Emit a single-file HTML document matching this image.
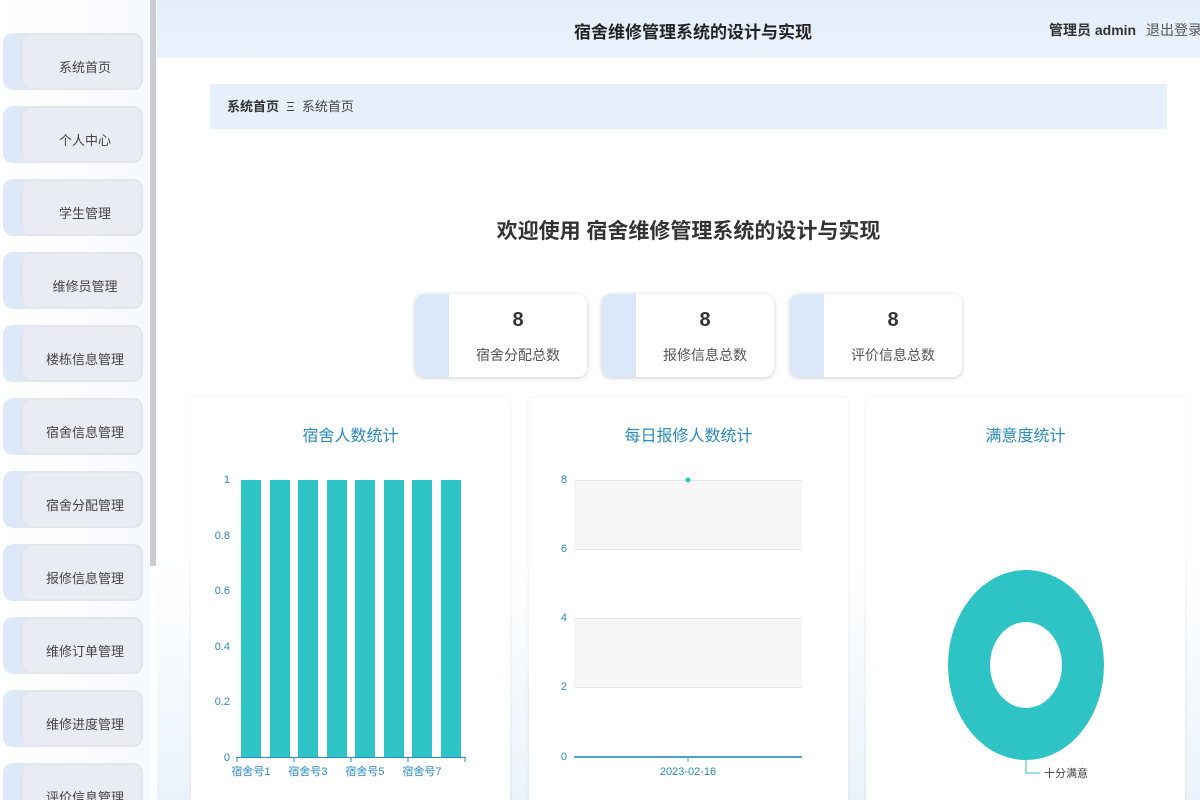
<!DOCTYPE html>
<html style="overflow:hidden"><head><meta charset="utf-8">
<style>
*{margin:0;padding:0;box-sizing:border-box}
html,body{width:1200px;height:800px;overflow:hidden}
body{position:relative;background:#fff;font-family:"Liberation Sans","Noto Sans CJK SC",sans-serif;color:#333}
.side{position:absolute;left:0;top:0;width:150px;height:800px;background:linear-gradient(90deg,#fff 0,#f6f9fd 100%)}
.scroll{position:absolute;left:150px;top:0;width:6px;height:566px;background:#c9ccd1}
.item{position:absolute;left:3px;width:140px;height:57px;background:#dde8f8;border-radius:10px}
.item div{position:absolute;left:18px;top:0;right:0;bottom:0;background:#e9ecf3;border:2px solid #e2e5ea;border-radius:10px;font-size:13px;color:#444;padding-top:24px;line-height:18px;text-align:center;padding-left:6px}
.top{position:absolute;left:157px;top:0;width:1043px;height:58px;background:linear-gradient(180deg,#e3eefb,#eaf2fc)}
.top .t{position:absolute;left:0;width:1072px;text-align:center;top:18px;font-size:17px;font-weight:bold;color:#222}
.top .u{position:absolute;right:-2px;top:20px;font-size:14px;font-weight:bold;color:#333}
.top .u span{color:#555;font-weight:normal;margin-left:6px}
.bc{position:absolute;left:210px;top:84px;width:957px;height:45px;background:#e6f0fb;font-size:13px;line-height:45px;padding-left:17px;color:#444}
.bc b{color:#333}
.welcome{position:absolute;left:0;width:1377px;top:215px;text-align:center;font-size:21px;font-weight:bold;color:#333}
.card{position:absolute;top:294px;width:172px;height:83px;background:#fff;border-radius:9px;box-shadow:0 1px 5px rgba(0,0,0,.2);overflow:hidden}
.card:before{content:"";position:absolute;left:0;top:0;bottom:0;width:34px;background:#dbe8f9}
.card .n{position:absolute;left:34px;right:0;top:15px;text-align:center;font-size:20px;font-weight:bold;color:#333}
.card .l{position:absolute;left:34px;right:0;top:51px;text-align:center;font-size:14px;color:#555}
.panel{position:absolute;top:398px;width:319px;height:420px;background:#fff;box-shadow:0 0 4px rgba(0,0,0,.08)}
.panel h3{text-align:center;font-weight:normal;font-size:16px;color:#2a8cc0;margin-top:24px}
.bgw{position:absolute;left:157px;top:560px;width:1043px;height:240px;background:linear-gradient(180deg,#fff,#eaf3fb)}
svg text{font-family:"Liberation Sans","Noto Sans CJK SC",sans-serif}
</style></head><body>
<div class="bgw"></div>
<div class="side">
<div class="item" style="top:33px"><div>系统首页</div></div>
<div class="item" style="top:106px"><div>个人中心</div></div>
<div class="item" style="top:179px"><div>学生管理</div></div>
<div class="item" style="top:252px"><div>维修员管理</div></div>
<div class="item" style="top:325px"><div>楼栋信息管理</div></div>
<div class="item" style="top:398px"><div>宿舍信息管理</div></div>
<div class="item" style="top:471px"><div>宿舍分配管理</div></div>
<div class="item" style="top:544px"><div>报修信息管理</div></div>
<div class="item" style="top:617px"><div>维修订单管理</div></div>
<div class="item" style="top:690px"><div>维修进度管理</div></div>
<div class="item" style="top:763px"><div>评价信息管理</div></div>
</div>
<div class="scroll"></div>
<div class="top"><div class="t">宿舍维修管理系统的设计与实现</div><div class="u">管理员 admin <span>退出登录</span></div></div>
<div class="bc"><b>系统首页</b>&nbsp; Ξ&nbsp; 系统首页</div>
<div class="welcome">欢迎使用 宿舍维修管理系统的设计与实现</div>
<div class="card" style="left:415px"><div class="n">8</div><div class="l">宿舍分配总数</div></div>
<div class="card" style="left:602px"><div class="n">8</div><div class="l">报修信息总数</div></div>
<div class="card" style="left:790px"><div class="n">8</div><div class="l">评价信息总数</div></div>

<div class="panel" style="left:191px"><h3>宿舍人数统计</h3></div>
<div class="panel" style="left:529px"><h3>每日报修人数统计</h3></div>
<div class="panel" style="left:866px"><h3>满意度统计</h3></div>

<svg style="position:absolute;left:0;top:0" width="1200" height="800">
<g fill="#2a8cc0" font-size="11">
<text x="230" y="483" text-anchor="end">1</text>
<text x="230" y="539" text-anchor="end">0.8</text>
<text x="230" y="594" text-anchor="end">0.6</text>
<text x="230" y="650" text-anchor="end">0.4</text>
<text x="230" y="705" text-anchor="end">0.2</text>
<text x="230" y="761" text-anchor="end">0</text>
</g>
<g fill="#2ec4c6">
<rect x="241" y="480" width="20" height="277"/><rect x="270" y="480" width="20" height="277"/>
<rect x="298" y="480" width="20" height="277"/><rect x="327" y="480" width="20" height="277"/>
<rect x="355" y="480" width="20" height="277"/><rect x="384" y="480" width="20" height="277"/>
<rect x="412" y="480" width="20" height="277"/><rect x="441" y="480" width="20" height="277"/>
</g>
<g stroke="#2a8cc0" stroke-width="1">
<line x1="236" y1="757.5" x2="466" y2="757.5"/>
<line x1="237" y1="757" x2="237" y2="762"/><line x1="294" y1="757" x2="294" y2="762"/><line x1="351" y1="757" x2="351" y2="762"/><line x1="408" y1="757" x2="408" y2="762"/><line x1="465" y1="757" x2="465" y2="762"/>
</g>
<g fill="#2a8cc0" font-size="11">
<text x="251" y="775" text-anchor="middle">宿舍号1</text><text x="308" y="775" text-anchor="middle">宿舍号3</text>
<text x="365" y="775" text-anchor="middle">宿舍号5</text><text x="422" y="775" text-anchor="middle">宿舍号7</text>
</g>
<rect x="574" y="480" width="228" height="69" fill="#f6f6f6"/>
<rect x="574" y="618" width="228" height="69" fill="#f6f6f6"/>
<g stroke="#e6e6e6"><line x1="574" y1="480.5" x2="802" y2="480.5"/><line x1="574" y1="549.5" x2="802" y2="549.5"/><line x1="574" y1="618.5" x2="802" y2="618.5"/><line x1="574" y1="687.5" x2="802" y2="687.5"/></g>
<line x1="574" y1="757" x2="802" y2="757" stroke="#4aa3c8" stroke-width="2"/>
<line x1="688" y1="757" x2="688" y2="762" stroke="#4aa3c8"/>
<g fill="#2a8cc0" font-size="11">
<text x="567" y="483" text-anchor="end">8</text><text x="567" y="552" text-anchor="end">6</text>
<text x="567" y="621" text-anchor="end">4</text><text x="567" y="690" text-anchor="end">2</text>
<text x="567" y="760" text-anchor="end">0</text>
<text x="688" y="775" text-anchor="middle">2023-02-16</text>
</g>
<circle cx="688" cy="480" r="2.5" fill="#2ec4c6"/>
<path fill="#2ec4c6" fill-rule="evenodd" d="M948 665a78 95 0 1 0 156 0a78 95 0 1 0 -156 0zM990 665a36 43 0 1 0 72 0a36 43 0 1 0 -72 0z"/>
<polyline points="1026,760 1026,773 1040,773" fill="none" stroke="#2ec4c6"/>
<text x="1044" y="777" font-size="11" fill="#444">十分满意</text>
</svg>
</body></html>
